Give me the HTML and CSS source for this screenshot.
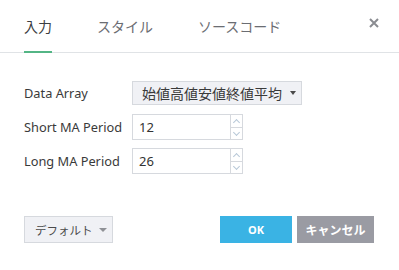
FILE: index.html
```html
<!DOCTYPE html>
<html lang="ja">
<head>
<meta charset="utf-8">
<link rel="stylesheet" href="styles.css">
</head>
<body>
<div class="dialog">
  <div class="header">
    <div class="tab active">入力</div>
    <div class="tab">スタイル</div>
    <div class="tab">ソースコード</div>
    <div class="close">
      <svg width="10" height="10" viewBox="0 0 10 10"><path d="M1 1L9 9M9 1L1 9" stroke="#8a8c91" stroke-width="2"/></svg>
    </div>
  </div>
  <div class="form">
    <div class="row">
      <div class="label">Data Array</div>
      <div class="select"><span>始値高値安値終値平均</span><i class="caret"></i></div>
    </div>
    <div class="row">
      <div class="label">Short MA Period</div>
      <div class="num"><span class="val">12</span><span class="spin"><b class="up"></b><b class="down"></b></span></div>
    </div>
    <div class="row">
      <div class="label">Long MA Period</div>
      <div class="num"><span class="val">26</span><span class="spin"><b class="up"></b><b class="down"></b></span></div>
    </div>
  </div>
  <div class="footer">
    <div class="btn default">デフォルト<i class="caret grey"></i></div>
    <div class="right">
      <div class="btn ok">OK</div>
      <div class="btn cancel">キャンセル</div>
    </div>
  </div>
</div>
</body>
</html>
```
FILE: styles.css
```css
html, body { margin: 0; padding: 0; background: #fff; }
body {
  font-family: "Noto Sans", "Noto Sans CJK JP", sans-serif;
  color: #3a3a3a;
  width: 399px;
  height: 270px;
  overflow: hidden;
}
.dialog { width: 399px; }
.header {
  display: flex;
  height: 52px;
  border-bottom: 1px solid #e0e3e6;
  padding-left: 24px;
  gap: 46px;
}
.tab {
  font-family: "Noto Sans CJK JP", sans-serif;
  font-size: 14px;
  line-height: 16px;
  padding-top: 18px;
  color: #6b6d72;
  box-sizing: border-box;
  margin-bottom: -1px;
  height: 53px;
}
.tab + .tab { margin-left: -1px; }
.tab.active {
  color: #3c3e42;
  border-bottom: 2px solid #53b585;
}
.close {
  margin-left: auto;
  width: 10px;
  padding-top: 18px;
  margin-right: 20px;
}
.close svg { display: block; }
.form {
  padding: 28px 0 0 24px;
}
.row {
  display: flex;
  align-items: center;
  height: 26px;
  margin-bottom: 8px;
}
.row:first-child { height: 24px; margin-bottom: 9px; }
.label {
  width: 108px;
  font-size: 12.8px;
  color: #3a3a3a;
}
.select {
  display: flex;
  align-items: center;
  width: 170px;
  height: 24px;
  box-sizing: border-box;
  background: #f0f1f5;
  border: 1px solid #d6d9de;
  padding-left: 9px;
  font-family: "Noto Sans CJK JP", sans-serif;
  font-size: 14px;
  color: #3a3a3a;
}
.select span { flex: 1; }
.caret {
  display: block;
  width: 0; height: 0;
  border-left: 3px solid transparent;
  border-right: 3px solid transparent;
  border-top: 4px solid #4a4a4a;
  margin-right: 5px;
}
.num {
  display: flex;
  width: 111px;
  height: 26px;
  box-sizing: border-box;
  border: 1px solid #d6d9de;
}
.val {
  flex: 1;
  font-size: 13px;
  line-height: 24px;
  padding-left: 6px;
  color: #333;
}
.spin {
  width: 11px;
  border-left: 1px solid #d6d9de;
  display: flex;
  flex-direction: column;
}
.spin b {
  flex: 1;
  position: relative;
}
.spin b.up { border-bottom: 1px solid #d6d9de; }
.spin b::after {
  content: "";
  position: absolute;
  left: 3px;
  width: 4px; height: 4px;
  border-left: 1px solid #b8c8d8;
  border-top: 1px solid #b8c8d8;
}
.spin b.up::after { top: 5px; transform: rotate(45deg); }
.spin b.down::after { top: 2px; transform: rotate(225deg); }
.footer {
  display: flex;
  justify-content: space-between;
  padding: 34px 25px 0 24px;
}
.right { display: flex; gap: 5px; }
.btn {
  height: 27px;
  box-sizing: border-box;
  display: flex;
  align-items: center;
  justify-content: center;
  font-family: "Noto Sans CJK JP", sans-serif;
  font-size: 12px;
  white-space: nowrap;
}
.btn.default {
  width: 89px;
  background: #f0f1f5;
  border: 1px solid #d6d9de;
  color: #4a4a4a;
  justify-content: flex-start;
  padding-left: 10px;
  font-size: 11.5px;
}
.btn.default .caret { margin-left: 6px; border-top-color: #8f9196; border-left-width: 4px; border-right-width: 4px; border-top-width: 4px; }
.btn.ok {
  width: 72px;
  background: #3ab3e4;
  color: #fff;
  font-weight: bold;
  font-family: "Noto Sans", sans-serif;
  font-size: 11px;
}
.btn.cancel {
  width: 77px;
  background: #9a9ba3;
  color: #fff;
  font-weight: bold;
}
```
